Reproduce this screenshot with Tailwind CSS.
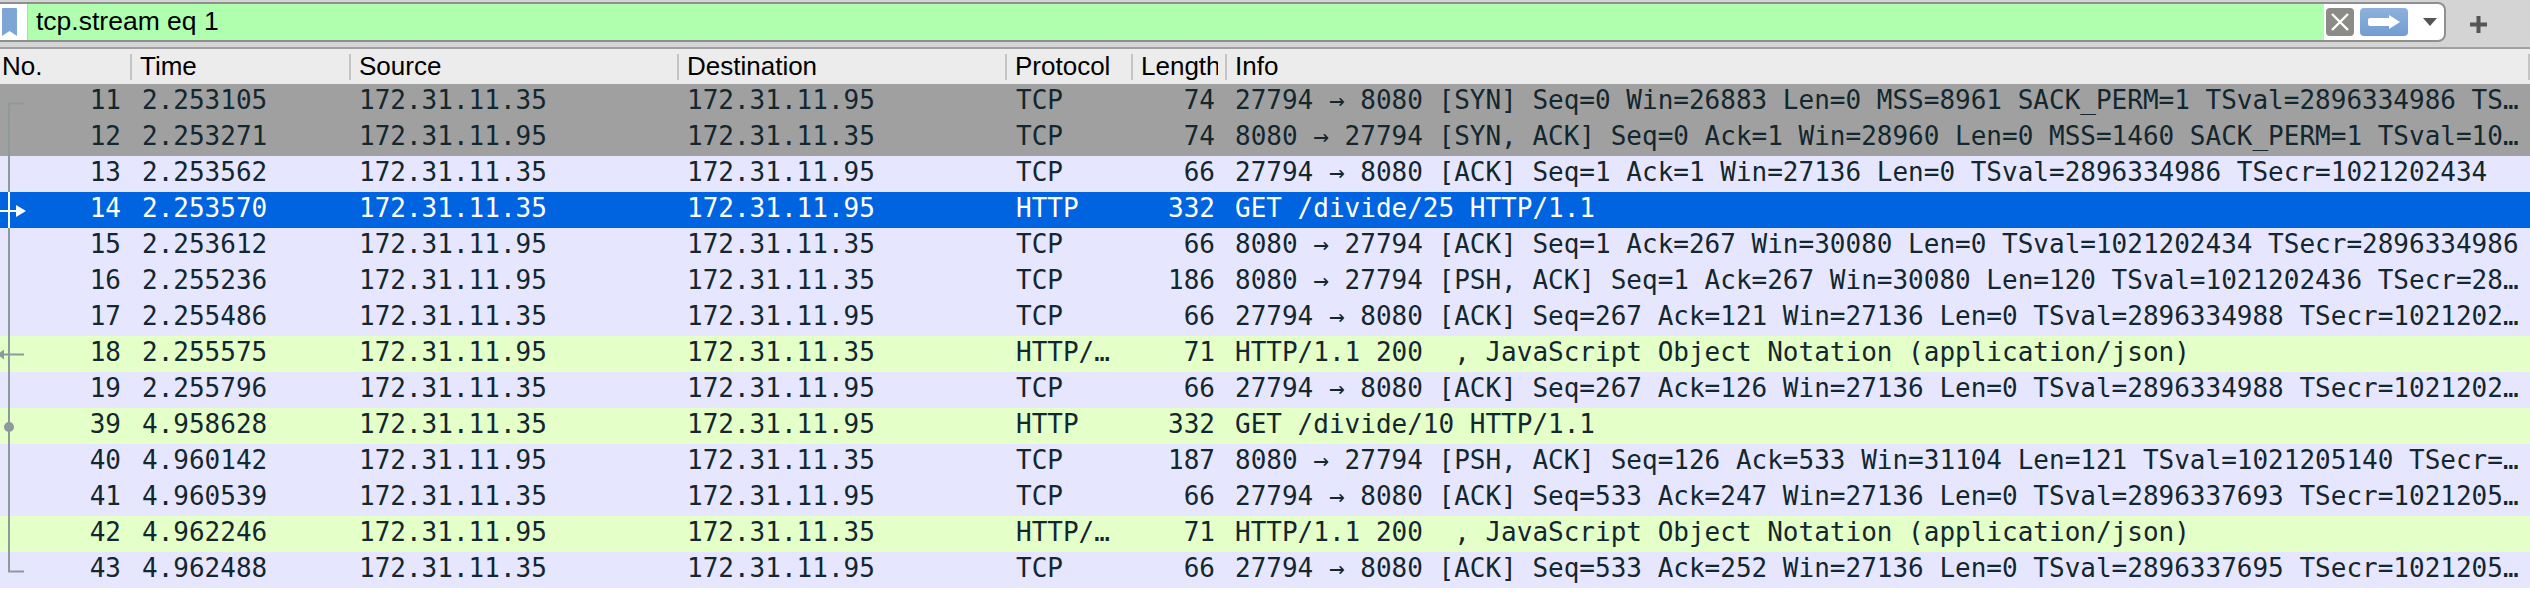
<!DOCTYPE html>
<html lang="en">
<head>
  <meta charset="UTF-8" />
  <title>Wireshark packet list</title>
  <script src="https://cdn.jsdelivr.net/npm/@tailwindcss/browser@4"></script>
</head>
<body class="w-[2530px] h-[596px] overflow-hidden bg-white">
  <!-- Filter toolbar -->
  <div class="h-[49px] bg-[#d4d4d4] border-b-2 border-[#a0a0a0] pt-[2px] flex items-start">
    <div class="w-[2446px] h-[40px] flex bg-white border-y-2 border-r-2 border-[#8f8f8f] rounded-r-[8px]">
      <div class="w-[28px] h-full pl-[2px] pt-[4px] border-r border-[#c8c8c8]">
        <svg class="block" width="15" height="28" viewBox="0 0 15 28"><path d="M1 0h13a1 1 0 0 1 1 1v27l-7.5-5L0 28V1a1 1 0 0 1 1-1z" fill="#7ea6d4"/></svg>
      </div>
      <div class="flex-1 bg-[#afffaf] pl-[8px] overflow-hidden">
        <span class="font-['Liberation_Sans',sans-serif] text-[26.5px] leading-[35px] text-black whitespace-pre">tcp.stream eq 1</span>
      </div>
      <div class="w-[120px] flex items-center pl-[2px] gap-[6px]">
        <div class="w-[28px] h-[28px] rounded-[4px] bg-[#8b8c88] flex items-center justify-center">
          <svg width="20" height="20" viewBox="0 0 20 20"><path d="M2 2l16 16M18 2L2 18" stroke="#fff" stroke-width="2.4"/></svg>
        </div>
        <div class="w-[48px] h-[28px] rounded-[4px] bg-linear-to-b from-[#8fb1dc] to-[#719dd2] flex items-center justify-center">
          <svg width="32" height="14" viewBox="0 0 32 14"><path d="M2 3h19V0l11 7-11 7v-3H2a2 2 0 0 1-2-2V5a2 2 0 0 1 2-2z" fill="#fff"/></svg>
        </div>
        <svg class="ml-[9px]" width="14" height="8" viewBox="0 0 14 8"><path d="M0 0h14L7 8z" fill="#555"/></svg>
      </div>
    </div>
    <svg class="ml-[24px] mt-[14px]" width="17" height="17" viewBox="0 0 17 17"><path d="M6.500 0h4v6.500h6.500v4h-6.500v6.500h-4v-6.500H0v-4h6.500z" fill="#555"/></svg>
  </div>

  <!-- Packet list -->
  <div class="relative">
    <div id="list"></div>
    <svg class="absolute left-0 top-0 pointer-events-none" width="30" height="540" viewBox="0 0 30 540">
      <path d="M24 54.500H9V143M9 179V522.500H24" fill="none" stroke="#8d9a9c" stroke-width="2"/>
      <path d="M9 143V179M0 162H17" fill="none" stroke="#fff" stroke-width="2"/>
      <path d="M16 156l10 6-10 6z" fill="#fff"/>
      <circle cx="9" cy="378" r="5" fill="#8d9a9c"/>
      <path d="M4 305.500H24" fill="none" stroke="#8d9a9c" stroke-width="2"/>
      <path d="M4 300.500v10l-4-3v-4z" fill="#8d9a9c"/>
    </svg>
  </div>

  <script>
    const kinds = {
      syn: 'bg-[#a0a0a0] text-[#12272e]',
      tcp: 'bg-[#e7e6ff] text-[#12272e]',
      http: 'bg-[#e4ffc7] text-[#12272e]',
      sel: 'bg-[#0064e1] text-white',
    };

    const packets = [
      ['syn', 11, '2.253105', '172.31.11.35', '172.31.11.95', 'TCP', 74, '27794 → 8080 [SYN] Seq=0 Win=26883 Len=0 MSS=8961 SACK_PERM=1 TSval=2896334986 TS…'],
      ['syn', 12, '2.253271', '172.31.11.95', '172.31.11.35', 'TCP', 74, '8080 → 27794 [SYN, ACK] Seq=0 Ack=1 Win=28960 Len=0 MSS=1460 SACK_PERM=1 TSval=10…'],
      ['tcp', 13, '2.253562', '172.31.11.35', '172.31.11.95', 'TCP', 66, '27794 → 8080 [ACK] Seq=1 Ack=1 Win=27136 Len=0 TSval=2896334986 TSecr=1021202434'],
      ['sel', 14, '2.253570', '172.31.11.35', '172.31.11.95', 'HTTP', 332, 'GET /divide/25 HTTP/1.1'],
      ['tcp', 15, '2.253612', '172.31.11.95', '172.31.11.35', 'TCP', 66, '8080 → 27794 [ACK] Seq=1 Ack=267 Win=30080 Len=0 TSval=1021202434 TSecr=2896334986'],
      ['tcp', 16, '2.255236', '172.31.11.95', '172.31.11.35', 'TCP', 186, '8080 → 27794 [PSH, ACK] Seq=1 Ack=267 Win=30080 Len=120 TSval=1021202436 TSecr=28…'],
      ['tcp', 17, '2.255486', '172.31.11.35', '172.31.11.95', 'TCP', 66, '27794 → 8080 [ACK] Seq=267 Ack=121 Win=27136 Len=0 TSval=2896334988 TSecr=1021202…'],
      ['http', 18, '2.255575', '172.31.11.95', '172.31.11.35', 'HTTP/…', 71, 'HTTP/1.1 200  , JavaScript Object Notation (application/json)'],
      ['tcp', 19, '2.255796', '172.31.11.35', '172.31.11.95', 'TCP', 66, '27794 → 8080 [ACK] Seq=267 Ack=126 Win=27136 Len=0 TSval=2896334988 TSecr=1021202…'],
      ['http', 39, '4.958628', '172.31.11.35', '172.31.11.95', 'HTTP', 332, 'GET /divide/10 HTTP/1.1'],
      ['tcp', 40, '4.960142', '172.31.11.95', '172.31.11.35', 'TCP', 187, '8080 → 27794 [PSH, ACK] Seq=126 Ack=533 Win=31104 Len=121 TSval=1021205140 TSecr=…'],
      ['tcp', 41, '4.960539', '172.31.11.35', '172.31.11.95', 'TCP', 66, '27794 → 8080 [ACK] Seq=533 Ack=247 Win=27136 Len=0 TSval=2896337693 TSecr=1021205…'],
      ['http', 42, '4.962246', '172.31.11.95', '172.31.11.35', 'HTTP/…', 71, 'HTTP/1.1 200  , JavaScript Object Notation (application/json)'],
      ['tcp', 43, '4.962488', '172.31.11.35', '172.31.11.95', 'TCP', 66, '27794 → 8080 [ACK] Seq=533 Ack=252 Win=27136 Len=0 TSval=2896337695 TSecr=1021205…'],
    ];

    const header = `
      <div class="h-[35px] bg-[#ececec] flex items-center font-['Liberation_Sans',sans-serif] text-[26px] leading-[24px] text-black">
        <div class="w-[130px] h-[26px] pl-[2px]">No.</div>
        <div class="w-[219px] h-[26px] pl-[8px] border-l-2 border-[#c4c4c4]">Time</div>
        <div class="w-[328px] h-[26px] pl-[8px] border-l-2 border-[#c4c4c4]">Source</div>
        <div class="w-[328px] h-[26px] pl-[8px] border-l-2 border-[#c4c4c4]">Destination</div>
        <div class="w-[126px] h-[26px] pl-[8px] border-l-2 border-[#c4c4c4] whitespace-nowrap">Protocol</div>
        <div class="w-[94px] h-[26px] pl-[8px] border-l-2 border-[#c4c4c4]"><div class="w-[77px] h-[26px] overflow-hidden whitespace-nowrap">Length</div></div>
        <div class="flex-1 h-[26px] pl-[8px] border-x-2 border-[#c4c4c4]">Info</div>
      </div>`;

    const rows = packets.map(([kind, no, time, src, dst, proto, len, info]) => `
      <div class="h-[36px] flex items-start whitespace-pre font-['DejaVu_Sans_Mono',monospace] text-[26px] leading-[33px] ${kinds[kind]}">
        <div class="w-[121px] text-right">${no}</div>
        <div class="w-[228px] pl-[21px]">${time}</div>
        <div class="w-[328px] pl-[10px]">${src}</div>
        <div class="w-[328px] pl-[10px]">${dst}</div>
        <div class="w-[126px] pl-[11px]">${proto}</div>
        <div class="w-[84px] text-right">${len}</div>
        <div class="flex-1 pl-[20px]">${info}</div>
      </div>`).join('');

    document.getElementById('list').innerHTML = header + rows;
  </script>
</body>
</html>
